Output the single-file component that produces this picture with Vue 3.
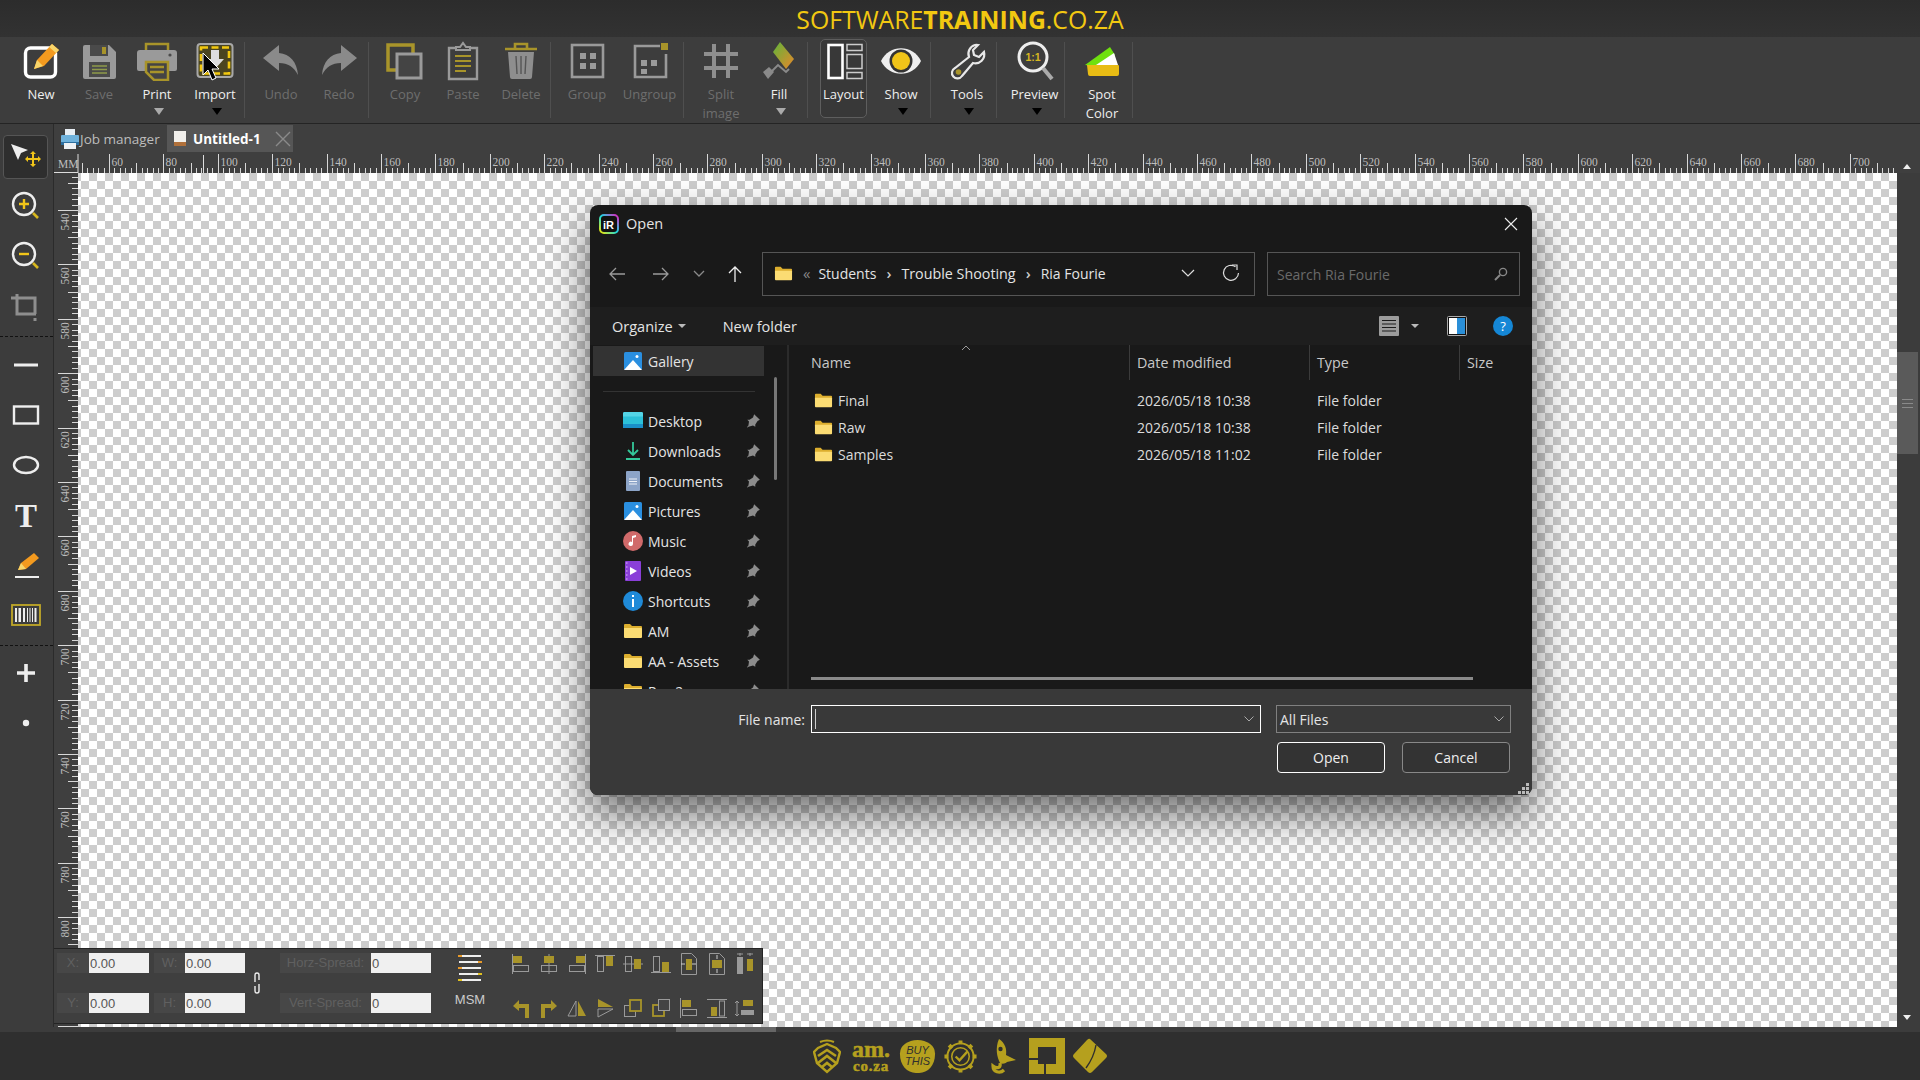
<template>
  <div class="app">
    <header class="title-bar"><span>SOFTWARE</span><b>TRAINING</b><span>.CO.ZA</span></header>

    <div class="toolbar">
      <template v-for="(t, i) in toolbar" :key="i">
        <i v-if="t.sep" class="tb-sep"></i>
        <button v-else class="tb-btn" :class="{ off: t.off, boxed: t.boxed }" :style="{ width: t.w + 'px', marginLeft: (t.ml || 0) + 'px' }">
          <svg class="tb-icon" viewBox="0 0 40 40" v-html="t.icon"></svg>
          <span class="tb-label">{{ t.label }}</span>
          <span v-if="t.label2" class="tb-label">{{ t.label2 }}</span>
          <i v-if="t.arrow" class="tb-arrow" :class="t.arrow"></i>
        </button>
      </template>
    </div>

    <div class="workspace">
      <aside class="side-tools">
        <template v-for="(t, i) in sideTools" :key="i">
          <hr v-if="t.dash" class="dash" :class="t.dash" />
          <div v-else class="side-cell">
            <div class="side-btn" :class="{ active: t.active }">
              <svg viewBox="0 0 36 36" width="36" height="36" v-html="t.icon"></svg>
            </div>
          </div>
        </template>
      </aside>

      <div class="doc-area">
        <div class="tabs">
          <div class="tab">
            <svg viewBox="0 0 20 22" width="20" height="22">
              <rect x="5" y="1" width="10" height="7" fill="#e8eef4" />
              <rect x="1" y="7" width="18" height="9" rx="1" fill="#6fb2dc" />
              <rect x="1" y="14" width="18" height="3" fill="#2d6f9f" />
              <rect x="4" y="15" width="12" height="6" fill="#eef1f4" />
            </svg>
            <span>Job manager</span>
          </div>
          <div class="tab current">
            <svg viewBox="0 0 14 18" width="14" height="18">
              <rect x="1" y="1" width="12" height="11" fill="#f2f0ec" />
              <rect x="1" y="12" width="12" height="4" fill="#b0703a" />
            </svg>
            <b>Untitled-1</b>
            <svg class="tab-x" viewBox="0 0 16 16" width="16" height="16"><path d="M1 1l14 14M15 1L1 15" stroke="#8a8a8a" stroke-width="1.4" /></svg>
          </div>
        </div>

        <svg class="h-ruler" width="1866" height="20" viewBox="0 0 1866 20">
          <text x="4" y="15" class="rt">MM</text>
          <path d="M0 19.5h24M24 1v19" stroke="#ddd" />
          <path v-for="t in hTicks" :key="t.x" :d="`M${t.x} ${20 - t.h}v${t.h}`" stroke="#d8d8d8" />
          <text v-for="l in hLabels" :key="l.v" :x="l.x + 2" y="13" class="rt">{{ l.v }}</text>
          <path d="M149.5 2v18" stroke="#ddd" />
        </svg>

        <div class="canvas-row">
          <svg class="v-ruler" width="24" height="854" viewBox="0 0 24 854">
            <path v-for="t in vTicks" :key="t.y" :d="`M${24 - t.h} ${t.y}h${t.h}`" stroke="#d8d8d8" />
            <text v-for="l in vLabels" :key="l.v" class="rt" :transform="`translate(15 ${l.y + 20}) rotate(-90)`">{{ l.v }}</text>
          </svg>
          <div class="canvas"></div>
          <div class="v-scroll">
            <svg class="sc-up" viewBox="0 0 8 5" width="8" height="5"><path d="M4 0l4 5H0z" fill="#eee" /></svg>
            <div class="v-thumb"><i></i><i></i><i></i></div>
            <svg class="sc-down" viewBox="0 0 8 5" width="8" height="5"><path d="M0 0h8L4 5z" fill="#eee" /></svg>
          </div>
        </div>
      </div>
    </div>

    <div class="h-scroll"><div class="h-thumb"></div></div>

    <footer class="bottom-bar">
      <svg viewBox="0 0 28 35" width="28" height="35">
        <path d="M7 3q7-3 14 0" fill="none" stroke="#b5a01e" stroke-width="2" />
        <path d="M14 5l9 4 4 4-3 11-10 9-10-9-3-11 4-4z" fill="none" stroke="#b5a01e" stroke-width="2.4" />
        <path d="M5 17l9-6 9 6M5 24l9-7 9 7M9 28l5-4 5 4" fill="none" stroke="#b5a01e" stroke-width="2.6" />
      </svg>
      <div class="logo-am"><b>am.</b><b>co.za</b></div>
      <div class="logo-buy"><span>BUY</span><span>THIS</span></div>
      <svg viewBox="0 0 36 36" width="35" height="35">
        <circle cx="18" cy="18" r="13.5" fill="none" stroke="#b5a01e" stroke-width="2" />
        <circle cx="18" cy="18" r="9" fill="none" stroke="#b5a01e" stroke-width="1.6" />
        <path d="M18 1.5v4M18 30.5v4M1.5 18h4M30.500 18h4M6.300 6.300l3 3M26.700 26.700l3 3M29.700 6.300l-3 3M9.300 26.700l-3 3" stroke="#b5a01e" stroke-width="4" />
        <path d="M13 18l4 4 8-9" fill="none" stroke="#b5a01e" stroke-width="2.4" />
      </svg>
      <svg viewBox="0 0 28 35" width="28" height="35">
        <path d="M9 0c6 4 8 10 7 16l10 5-9 2c-2 2-5 2-7 1C7 18 5 9 9 0z" fill="#b5a01e" />
        <circle cx="10.500" cy="10" r="2.200" fill="#2f2f2f" />
        <path d="M10 24c1 5-3 6-7 3 0 6 7 8 11 4" fill="none" stroke="#b5a01e" stroke-width="3.200" />
      </svg>
      <svg viewBox="0 0 36 36" width="36" height="36">
        <rect width="36" height="36" fill="#b5a01e" />
        <rect x="9" y="9" width="18" height="17" fill="#2f2f2f" />
        <path d="M0 21h9M16 26v10" stroke="#2f2f2f" stroke-width="2" />
      </svg>
      <svg viewBox="0 0 36 36" width="36" height="36">
        <path d="M18 1l16 15q2 2 0 4L20 34q-2 2-4 0L2 20q-2-2 0-4L15 2q2-2 3-1z" fill="#b5a01e" />
        <path d="M24 7q-2 12-10 23" fill="none" stroke="#2f2f2f" stroke-width="1.4" />
      </svg>
    </footer>

    <!-- floating property bar over the canvas -->
    <div class="prop-panel">
      <div class="prop-fields">
        <label>X:</label><input class="num" value="0.00" readonly />
        <label class="second">W:</label><input class="num" value="0.00" readonly />
        <svg class="link" viewBox="0 0 10 26" width="10" height="26">
          <path d="M3 12V5a2 2 0 0 1 4 0v5M7 14v7a2 2 0 0 1-4 0v-5" fill="none" stroke="#eee" stroke-width="1.4" />
        </svg>
        <label>Horz-Spread:</label><input class="num" value="0" readonly />
        <label>Y:</label><input class="num" value="0.00" readonly />
        <label class="second">H:</label><input class="num" value="0.00" readonly />
        <label>Vert-Spread:</label><input class="num" value="0" readonly />
      </div>
      <div class="msm">
        <svg viewBox="0 0 26 30" width="26" height="30">
          <path d="M2 3h22M2 9h22M2 15h22M2 21h22M2 27h22" stroke="#eee" stroke-width="2" />
          <path d="M1 2h4v2H1zM21 8h4v2h-4zM1 14h4v2H1z" fill="#e89a2a" />
          <path d="M21 20h4v2h-4zM1 26h4v2H1z" fill="#e0c020" />
        </svg>
        <span>MSM</span>
      </div>
      <div class="align-grid">
        <svg v-for="(a, i) in alignIcons" :key="i" viewBox="0 0 22 22" width="22" height="22" v-html="a"></svg>
      </div>
    </div>

    <!-- Open dialog -->
    <section class="dialog">
      <div class="dlg-title">
        <svg viewBox="0 0 20 20" width="20" height="20">
          <defs>
            <linearGradient id="irg" x1="0" y1="1" x2="1" y2="0">
              <stop offset="0" stop-color="#f5e600" /><stop offset=".5" stop-color="#18d8e0" /><stop offset="1" stop-color="#e020c0" />
            </linearGradient>
          </defs>
          <rect x="1" y="1" width="18" height="18" rx="4" fill="#111" stroke="url(#irg)" stroke-width="2" />
          <text x="4" y="14.500" class="ir">iR</text>
        </svg>
        <span>Open</span>
        <svg class="dlg-close" viewBox="0 0 14 14" width="14" height="14"><path d="M1 1l12 12M13 1L1 13" stroke="#eee" stroke-width="1.100" /></svg>
      </div>

      <div class="addr-row">
        <button class="nav-b w44"><svg viewBox="0 0 18 18" width="18" height="18"><path d="M17 9H2M8 3L2 9l6 6" fill="none" stroke="#9a9a9a" stroke-width="1.300" /></svg></button>
        <button class="nav-b w44"><svg viewBox="0 0 18 18" width="18" height="18"><path d="M1 9h15M10 3l6 6-6 6" fill="none" stroke="#9a9a9a" stroke-width="1.300" /></svg></button>
        <button class="nav-b w32"><svg viewBox="0 0 12 8" width="12" height="8"><path d="M1 1l5 5 5-5" fill="none" stroke="#8a8a8a" stroke-width="1.300" /></svg></button>
        <button class="nav-b w40"><svg viewBox="0 0 18 18" width="18" height="18"><path d="M9 17V2M3 8l6-6 6 6" fill="none" stroke="#eee" stroke-width="1.300" /></svg></button>
        <div class="addr-box">
          <svg class="addr-folder" viewBox="0 0 20 20" width="19" height="19" v-html="folder"></svg>
          <span class="crumb-sep first">«</span>
          <span>Students</span><span class="crumb-sep">›</span>
          <span class="wide">Trouble Shooting</span><span class="crumb-sep">›</span>
          <span>Ria Fourie</span>
          <span class="addr-end">
            <svg viewBox="0 0 14 8" width="14" height="8"><path d="M1 1l6 6 6-6" fill="none" stroke="#ddd" stroke-width="1.200" /></svg>
          </span>
          <span class="addr-refresh">
            <svg viewBox="0 0 18 18" width="18" height="18"><path d="M13.500 2.800A7.500 7.500 0 1 0 16.500 9" fill="none" stroke="#ddd" stroke-width="1.200" /><path d="M10 1h5v5" fill="none" stroke="#ddd" stroke-width="1.200" /></svg>
          </span>
        </div>
        <div class="search-box">
          <span>Search Ria Fourie</span>
          <svg viewBox="0 0 14 14" width="14" height="14"><circle cx="9" cy="5" r="3.600" fill="none" stroke="#888" stroke-width="1.400" /><path d="M6 8l-5 5" stroke="#888" stroke-width="2" /></svg>
        </div>
      </div>

      <div class="cmd-strip">
        <span>Organize</span><i class="caret"></i>
        <span class="new-folder">New folder</span>
        <div class="cmd-right">
          <svg viewBox="0 0 20 20" width="20" height="20"><rect width="20" height="20" rx="1" fill="#9c9c9c" /><path d="M3 4.500h14M3 8h14M3 11.500h14M3 15h14" stroke="#1c1c1c" stroke-width="1.200" /></svg>
          <i class="caret view"></i>
          <svg class="pane-ic" viewBox="0 0 20 20" width="20" height="20"><rect x=".5" y=".5" width="19" height="19" rx="1" fill="#111" stroke="#aaa" /><rect x="2" y="2" width="8" height="16" fill="#fff" /><rect x="10" y="2" width="8" height="16" fill="#2a8fd8" /></svg>
          <svg class="help-ic" viewBox="0 0 20 20" width="20" height="20"><circle cx="10" cy="10" r="10" fill="#1587d6" /><text x="10" y="15" class="q">?</text></svg>
        </div>
      </div>

      <div class="dlg-body">
        <nav class="nav-pane">
          <div class="nav-row gallery">
            <svg viewBox="0 0 20 20" width="20" height="20" v-html="picIcon"></svg>
            <span>Gallery</span>
          </div>
          <div class="nav-line"></div>
          <div v-for="n in navItems" :key="n.name" class="nav-row">
            <svg viewBox="0 0 20 20" width="20" height="20" v-html="n.icon"></svg>
            <span>{{ n.name }}</span>
            <svg class="pin" viewBox="0 0 14 14" width="16" height="16"><path d="M8 1l5 5-2 1-2 3v2L7 11 3 12l-1 1 0-1 1-1 .5-3.500L2 6h2l3-2z" fill="#8c8c8c" /></svg>
          </div>
          <i class="nav-thumb"></i>
        </nav>
        <div class="file-list">
          <div class="f-head">
            <span>Name</span><span>Date modified</span><span>Type</span><span>Size</span>
            <svg class="sort" viewBox="0 0 10 6" width="10" height="6"><path d="M1 5l4-4 4 4" fill="none" stroke="#999" /></svg>
          </div>
          <div v-for="f in files" :key="f.name" class="f-row">
            <span class="f-name"><svg viewBox="0 0 20 20" width="19" height="19" v-html="folder"></svg>{{ f.name }}</span>
            <span>{{ f.date }}</span>
            <span>File folder</span>
            <span></span>
          </div>
          <i class="list-hbar"></i>
        </div>
      </div>

      <div class="dlg-foot">
        <div class="foot-row">
          <label class="fn-label">File name:</label>
          <div class="fn-input"><i class="text-caret"></i>
            <svg viewBox="0 0 10 6" width="10" height="6"><path d="M.5.500L5 5 9.500.500" fill="none" stroke="#aaa" /></svg>
          </div>
          <div class="fn-filter">All Files
            <svg viewBox="0 0 10 6" width="10" height="6"><path d="M.5.500L5 5 9.500.500" fill="none" stroke="#aaa" /></svg>
          </div>
        </div>
        <div class="foot-btns">
          <button class="dbtn primary">Open</button>
          <button class="dbtn">Cancel</button>
        </div>
        <svg class="grip" viewBox="0 0 11 11" width="11" height="11"><path d="M8 0h3v3H8zM4 4h3v3H4zM8 4h3v3H8zM0 8h3v3H0zM4 8h3v3H4zM8 8h3v3H8z" fill="#bbb" /></svg>
      </div>
    </section>

    <svg class="cursor" viewBox="0 0 18 30" width="18" height="30">
      <path d="M1 1v22l5-5 4 10 4-2-4-9h7z" fill="#000" stroke="#fff" stroke-width="1" />
    </svg>
  </div>
</template>

<script setup>
const G = '#a8942a'
const L = '#9a9a9a'

const toolbar = [
  { label: 'New', w: 58, ml: 12, icon: `<rect x="4.500" y="7" width="30" height="29" rx="5" fill="none" stroke="#fff" stroke-width="3.400"/><path d="M13 28l3-9L31 3l7 6-15 16z" fill="#f39a1f"/><path d="M31 3l7 6-3 3-7-6z" fill="#f8d56b"/><path d="M13 28l3-9 6 6z" fill="#f8d56b"/>` },
  { label: 'Save', w: 58, off: true, icon: `<path d="M4 6a2 2 0 0 1 2-2h24l7 7v25a2 2 0 0 1-2 2H6a2 2 0 0 1-2-2z" fill="#9a9a9a"/><rect x="11" y="4" width="18" height="11" fill="#4a4a4a"/><rect x="23" y="6" width="4" height="7" fill="${G}"/><rect x="10" y="21" width="21" height="15" fill="#4a4a4a"/><path d="M13 25h15M13 28.500h15M13 32h15" stroke="#8f9a4a" stroke-width="1.600"/>` },
  { label: 'Print', w: 58, arrow: 'grey', icon: `<path d="M9 10V3h22v7" fill="none" stroke="${G}" stroke-width="2.500"/><path d="M0 12a3 3 0 0 1 3-3h34a3 3 0 0 1 3 3v16a2 2 0 0 1-2 2H2a2 2 0 0 1-2-2z" fill="#9a9a9a"/><circle cx="33" cy="14" r="1.600" fill="#4a4a4a"/><path d="M9 21h22v18H17l-8-8z" fill="#444" stroke="${G}" stroke-width="2.500"/><path d="M13 26h14M13 31h14" stroke="${G}" stroke-width="2.500"/>` },
  { label: 'Import', w: 58, arrow: 'black', icon: `<rect x="2.500" y="3" width="35" height="33" rx="3" fill="#4b4520" stroke="#a8a8a8" stroke-width="2"/><rect x="6" y="6.500" width="28" height="26" fill="none" stroke="#f2c80f" stroke-width="2.600" stroke-dasharray="7 3.500"/><path d="M16 9h8v9h5l-9 10-9-10h5z" fill="#ddd"/>` },
  { sep: true },
  { label: 'Undo', w: 58, off: true, icon: `<path d="M2 17L18 4v8c11 1 18 9 19 22-4-8-10-12-19-12v8z" fill="#8a8a8a"/>` },
  { label: 'Redo', w: 58, off: true, icon: `<path d="M38 17L22 4v8c-11 1-18 9-19 22 4-8 10-12 19-12v8z" fill="#8a8a8a"/>` },
  { sep: true },
  { label: 'Copy', w: 58, off: true, icon: `<rect x="3" y="4" width="25" height="25" fill="none" stroke="${G}" stroke-width="3.500"/><rect x="12" y="13" width="24" height="24" fill="#444" stroke="#9a9a9a" stroke-width="3"/>` },
  { label: 'Paste', w: 58, off: true, icon: `<path d="M12 7H6v31h28V7h-6" fill="none" stroke="${L}" stroke-width="2.400"/><path d="M13 9V6h4l3-4 3 4h4v3z" fill="none" stroke="${L}" stroke-width="2"/><path d="M12 15h16M12 20h16M12 25h16M12 30h11" stroke="${G}" stroke-width="2"/>` },
  { label: 'Delete', w: 58, off: true, icon: `<path d="M4 8h32M14 7V3h12v4" fill="none" stroke="${G}" stroke-width="2.600"/><path d="M7 11h26l-2 25a2 2 0 0 1-2 2H11a2 2 0 0 1-2-2z" fill="#8e8e8e"/><path d="M15 15l1 18M20 15v18M25 15l-1 18" stroke="#555" stroke-width="1.400"/>` },
  { sep: true },
  { label: 'Group', w: 58, off: true, icon: `<rect x="5" y="4" width="31" height="32" fill="none" stroke="${L}" stroke-width="2.600"/><path d="M13 12h6v6h-6zM23 12h6v6h-6zM13 22h6v6h-6zM23 22h6v6h-6z" fill="${L}"/>` },
  { label: 'Ungroup', w: 67, off: true, icon: `<path d="M30 5H5v31h31V13" fill="none" stroke="${L}" stroke-width="2.600"/><path d="M31 2h7v7h-7z" fill="${G}"/><path d="M11 19h6v6h-6zM21 19h6v6h-6zM11 28h6v5h-6z" fill="${L}"/>` },
  { sep: true },
  { label: 'Split', label2: 'image', w: 60, off: true, icon: `<path d="M13 3v34M27 3v34M3 13h34M3 27h34" stroke="#8e8e8e" stroke-width="4"/>` },
  { label: 'Fill', w: 56, arrow: 'grey', icon: `<defs><linearGradient id="rollg" x1="0" y1="0" x2="1" y2="1"><stop offset="0" stop-color="#5fb53a"/><stop offset="1" stop-color="#e8872a"/></linearGradient></defs><path d="M14 11L21 1l14 17-8 10z" fill="url(#rollg)"/><path d="M30 28l-3 3-8-7-8 8" fill="none" stroke="#8a8a8a" stroke-width="2"/><path d="M4 31l6-5 5 5-6 7z" fill="#8a8a8a"/>` },
  { sep: true },
  { label: 'Layout', w: 47, ml: 5, boxed: true, icon: `<rect x="4.500" y="4" width="14" height="33" fill="none" stroke="#fff" stroke-width="2.600"/><path d="M23 3.500h15v6H23zM23 13.500h15v14H23zM23 31.500h15v6H23z" fill="none" stroke="#ccc" stroke-width="1.500"/>` },
  { label: 'Show', w: 58, ml: 5, arrow: 'black', icon: `<path d="M0 20C8 3 32 3 40 20 32 37 8 37 0 20z" fill="#eee"/><circle cx="20" cy="20" r="11.500" fill="#333"/><circle cx="20" cy="20" r="9" fill="#f0c419"/>` },
  { sep: true },
  { label: 'Tools', w: 58, arrow: 'black', icon: `<path d="M28 4a9 9 0 0 0-6 12L8 27a5.500 5.500 0 1 0 7 8l11-13a9 9 0 0 0 11-11l-5 5-5-2-1-5 5-5a9 9 0 0 0-3 0z" fill="none" stroke="#e8e8e8" stroke-width="2.200"/><circle cx="11.500" cy="31" r="2.800" fill="${G}"/>` },
  { sep: true },
  { label: 'Preview', w: 59, ml: 1, arrow: 'black', icon: `<circle cx="18" cy="16" r="14" fill="none" stroke="#eee" stroke-width="3"/><path d="M28 27l9 11" stroke="#aaa" stroke-width="4"/><text x="18" y="20" text-anchor="middle" font-family="Liberation Sans" font-weight="700" font-size="10.500" fill="#d8b820">1:1</text>` },
  { sep: true },
  { label: 'Spot', label2: 'Color', w: 60, icon: `<path d="M3 24L28 6l5 8-14 12z" fill="#6fe00f"/><path d="M14 24l18-12 4 12z" fill="#fff"/><path d="M5 24h31a1 1 0 0 1 1 1l0 8a2 2 0 0 1-2 2H8a2 2 0 0 1-2-2z" fill="#e8bc14"/>` },
  { sep: true }
]

const sideTools = [
  { active: true, icon: `<path d="M3 5l17 6-7 3-3 7z" fill="#eee"/><path d="M25 12l3 3h-2v4h4v-2l3 3-3 3v-2h-4v4h2l-3 3-3-3h2v-4h-4v2l-3-3 3-3v2h4v-4h-2z" fill="#f0c419"/>` },
  { icon: `<circle cx="16" cy="15" r="11" fill="none" stroke="#eee" stroke-width="2.400"/><path d="M11 15h10M16 10v10" stroke="#f0c419" stroke-width="2.400"/><path d="M25 24l5 5" stroke="#d8b820" stroke-width="2.600"/>` },
  { icon: `<circle cx="16" cy="15" r="11" fill="none" stroke="#eee" stroke-width="2.400"/><path d="M11 15h10" stroke="#f0c419" stroke-width="2.400"/><path d="M25 24l5 5" stroke="#d8b820" stroke-width="2.600"/>` },
  { icon: `<path d="M3 9h5M9 5v20h19" fill="none" stroke="#8e8e8e" stroke-width="3"/><path d="M9 9h18v16" fill="none" stroke="#8e8e8e" stroke-width="3"/><path d="M27 29v3" stroke="#8e8e8e" stroke-width="3"/>` },
  { dash: 'd1' },
  { icon: `<path d="M6 18h24" stroke="#eee" stroke-width="3"/>` },
  { icon: `<rect x="6" y="9.500" width="24" height="17" fill="none" stroke="#eee" stroke-width="2.400"/>` },
  { icon: `<ellipse cx="18" cy="18" rx="12" ry="8" fill="none" stroke="#eee" stroke-width="2.400"/>` },
  { icon: `<text x="18" y="30" text-anchor="middle" font-family="Liberation Serif" font-weight="700" font-size="33" fill="#eee">T</text>` },
  { icon: `<path d="M10 23l3-7L26 6l5 5-13 11z" fill="#f39a1f"/><path d="M10 23l3-7 5 6z" fill="#f8d56b"/><path d="M7 30h24" stroke="#eee" stroke-width="2"/>` },
  { icon: `<rect x="4" y="8" width="28" height="20" fill="none" stroke="#c0a828" stroke-width="1.800"/><path d="M7 11h2v14H7zM10.500 11h2.500v14h-2.500zM15 11h2v14h-2zM19 11h1v14h-1zM21.500 11h1v14h-1zM24 11h1v14h-1zM26.500 11h2v14h-2z" fill="#eee"/>` },
  { dash: 'd2' },
  { icon: `<path d="M18 9v18M9 18h18" stroke="#eee" stroke-width="3.600"/>` },
  { icon: `<circle cx="18" cy="18" r="3.200" fill="#eee"/>` }
]

const alignIcons = [
  `<path d="M2.500 1v20" stroke="${L}"/><rect x="3" y="3" width="9" height="7" fill="${G}"/><rect x="3.500" y="12.500" width="15" height="6" fill="none" stroke="${L}"/>`,
  `<path d="M11 1v20" stroke="${L}"/><rect x="6" y="3" width="10" height="7" fill="${G}"/><rect x="3.500" y="12.500" width="15" height="6" fill="none" stroke="${L}"/>`,
  `<path d="M19.500 1v20" stroke="${L}"/><rect x="10" y="3" width="9" height="7" fill="${G}"/><rect x="3.500" y="12.500" width="15" height="6" fill="none" stroke="${L}"/>`,
  `<path d="M1 2.500h20" stroke="${L}"/><rect x="3.500" y="3.500" width="6" height="15" fill="none" stroke="${L}"/><rect x="12" y="3" width="7" height="10" fill="${G}"/>`,
  `<path d="M1 11h20" stroke="${L}"/><rect x="3.500" y="3.500" width="6" height="15" fill="none" stroke="${L}"/><rect x="12" y="6" width="7" height="10" fill="${G}"/>`,
  `<path d="M1 19.500h20" stroke="${L}"/><rect x="3.500" y="3.500" width="6" height="15" fill="none" stroke="${L}"/><rect x="12" y="9" width="7" height="10" fill="${G}"/>`,
  `<path d="M3.500.500h10l5 5v16h-15z" fill="none" stroke="${L}"/><rect x="8" y="6" width="6" height="11" fill="${G}"/><path d="M3 11h4M14 11h4" stroke="#ccc"/>`,
  `<path d="M3.500.500h10l5 5v16h-15z" fill="none" stroke="${L}"/><rect x="6" y="7" width="10" height="8" fill="${G}"/><path d="M11 2v4M11 16v4" stroke="#ccc"/>`,
  `<path d="M3 1h6M13 1h6M6 0v3M16 0v3" stroke="${L}"/><rect x="3" y="4" width="6" height="17" fill="${L}"/><rect x="13" y="6" width="6" height="12" fill="${G}"/>`,
  `<path d="M9 3L3 9l6 5v-3h6v10h4V7H9z" fill="${G}"/>`,
  `<path d="M13 3l6 6-6 5v-3H7v10H3V7h10z" fill="${G}"/>`,
  `<path d="M10 4L2 19h8z" fill="none" stroke="${L}"/><path d="M12 4l8 15h-8z" fill="${G}"/>`,
  `<path d="M4 2l15 8H4z" fill="${G}"/><path d="M4 12h15l-15 8z" fill="none" stroke="${L}"/>`,
  `<rect x="2.500" y="8.500" width="11" height="11" fill="none" stroke="${L}"/><rect x="8" y="3" width="11" height="11" fill="#444" stroke="${G}" stroke-width="1.800"/>`,
  `<rect x="3" y="8" width="11" height="11" fill="none" stroke="${G}" stroke-width="1.800"/><rect x="8.500" y="2.500" width="11" height="11" fill="#444" stroke="${L}"/>`,
  `<path d="M2.500 1v20" stroke="${L}"/><rect x="4" y="3" width="9" height="7" fill="${G}"/><rect x="4.500" y="12.500" width="14" height="6" fill="none" stroke="${L}"/>`,
  `<path d="M1 2.500h20M1 20.500h20" stroke="${L}"/><rect x="13.500" y="4" width="5" height="15" fill="none" stroke="${L}"/><rect x="5" y="10" width="6" height="9" fill="${G}"/>`,
  `<path d="M3 4v15M1 6l2-2 2 2M1 17l2 2 2-2" fill="none" stroke="${L}"/><rect x="9" y="3" width="10" height="6" fill="${G}"/><rect x="7" y="13" width="13" height="5" fill="${L}"/>`
]

const folder = `<path d="M1 4a1 1 0 0 1 1-1h5l2 2h9a1 1 0 0 1 1 1v3H1z" fill="#dcae2e"/><path d="M1 7h17a1 1 0 0 1 1 1v8a1 1 0 0 1-1 1H2a1 1 0 0 1-1-1z" fill="#fbdc73"/>`
const picIcon = `<rect x="1" y="1" width="18" height="18" rx="1.500" fill="#2a8fe0"/><circle cx="14" cy="5.500" r="1.500" fill="#fff"/><path d="M1 19l9-10 9 10z" fill="#fff"/>`

const navItems = [
  { name: 'Desktop', icon: `<rect x="0" y="1" width="20" height="16" rx="1.500" fill="#2cc0d8"/><path d="M0 2.500a1.500 1.500 0 0 1 1.500-1.500h17a1.500 1.500 0 0 1 1.500 1.500v3H0z" fill="#54d4e6"/><path d="M0 13h20v4H0z" fill="#1a8fc8"/>` },
  { name: 'Downloads', icon: `<path d="M10 1v12M5 9l5 5 5-5" fill="none" stroke="#34c89a" stroke-width="1.800"/><path d="M3 18h14" stroke="#34c89a" stroke-width="2"/>` },
  { name: 'Documents', icon: `<rect x="3" y="0" width="14" height="20" rx="1" fill="#8ca4c8"/><path d="M6 8h8M6 10.500h8M6 13h8" stroke="#eef2f8" stroke-width="1.100"/>` },
  { name: 'Pictures', icon: picIcon },
  { name: 'Music', icon: `<circle cx="10" cy="10" r="10" fill="#d06a6a"/><path d="M9 5l4-1v2l-3 1v6a2.200 2.200 0 1 1-1-2z" fill="#fff"/>` },
  { name: 'Videos', icon: `<rect x="2" y="0" width="16" height="20" rx="1" fill="#8a3fd8"/><path d="M7 6l7 4-7 4z" fill="#fff"/><path d="M3 2h1.500M3 6h1.500M3 10h1.500M3 14h1.500M3 18h1.500" stroke="#d8bff5" />` },
  { name: 'Shortcuts', icon: `<circle cx="10" cy="10" r="10" fill="#1f8ad8"/><rect x="9" y="8" width="2" height="8" fill="#fff"/><rect x="9" y="4" width="2" height="2" fill="#fff"/>` },
  { name: 'AM', icon: folder },
  { name: 'AA - Assets', icon: folder },
  { name: 'Rev 2', icon: folder }
]

const files = [
  { name: 'Final', date: '2026/05/18 10:38' },
  { name: 'Raw', date: '2026/05/18 10:38' },
  { name: 'Samples', date: '2026/05/18 11:02' }
]

// ruler maths: 20 mm = 54.4 px on both axes
const MM = 54.4 / 20
const tickLen = (v) => (v % 20 === 0 ? 19 : v % 10 === 0 ? 10 : 5)

const hTicks = []
const hLabels = []
for (let v = 50; v <= 720; v += 2) {
  const x = Math.round(55 + (v - 60) * MM) + 0.5
  if (x < 24 || x > 1843) continue
  hTicks.push({ x, h: tickLen(v) })
  if (v % 20 === 0 && x < 1800) hLabels.push({ v, x })
}

const vTicks = []
const vLabels = []
for (let v = 526; v <= 840; v += 2) {
  const y = Math.round(37 + (v - 540) * MM) + 0.5
  if (y < 0 || y > 854) continue
  vTicks.push({ y, h: v % 20 === 0 ? 20 : v % 10 === 0 ? 10 : 6 })
  if (v % 20 === 0 && y + 24 < 774) vLabels.push({ v, y })
}
</script>

<style>
html, body { margin: 0; background: #2f2f2f; }
</style>

<style scoped>
.app { width: 1920px; height: 1080px; position: relative; overflow: hidden; display: flex; flex-direction: column; background: #3c3c3c; font-family: "Open Sans", "Noto Sans", sans-serif; color: #eee; }
.title-bar { height: 37px; background: linear-gradient(#2c2c2c, #323232); display: flex; justify-content: center; align-items: center; font-size: 24.800px; color: #f2c811; }
.title-bar b { font-weight: 700; }

.toolbar { height: 86px; display: flex; border-bottom: 1px solid #242424; background: #3d3d3d; box-sizing: content-box; flex: none; }
.tb-btn { background: none; border: 0; padding: 4px 0 0; display: flex; flex-direction: column; align-items: center; color: #eee; font: inherit; position: relative; height: 86px; box-sizing: border-box; }
.tb-btn.off { color: #6e6e6e; }
.tb-btn.boxed { border: 1px solid #5e5e5e; border-radius: 5px; height: 79px; margin-top: 2px; padding-top: 1px; background: #383838; }
.tb-icon { width: 40px; height: 40px; flex: none; }
.tb-label { font-size: 13px; line-height: 19px; white-space: nowrap; }
.tb-label:first-of-type { margin-top: 4px; }
.tb-arrow { margin: 4px 0 0 4px; width: 0; height: 0; border-left: 5px solid transparent; border-right: 5px solid transparent; border-top: 7px solid #000; }
.tb-arrow.grey { border-top-color: #aaa; }
.tb-sep { width: 1px; height: 76px; background: #4f4f4f; margin: 5px 7px 0 0; flex: none; }

.workspace { flex: 1; display: flex; min-height: 0; }
.side-tools { width: 54px; flex: none; box-sizing: border-box; border-right: 1px solid #2b2b2b; padding-top: 8px; background: #3c3c3c; }
.side-cell { height: 50px; display: flex; align-items: center; justify-content: center; padding-right: 2px; }
.side-btn { width: 45px; height: 44px; display: flex; align-items: center; justify-content: center; box-sizing: border-box; }
.side-btn.active { background: #2e2e2e; border: 1px solid #555; border-radius: 4px; }
.dash { border: 0; border-top: 1px dashed #111; margin: 0; }
.dash.d1 { margin: 4px 0 3px; }
.dash.d2 { margin: 5px 0 2px; }

.doc-area { flex: 1; display: flex; flex-direction: column; min-width: 0; }
.tabs { height: 29px; display: flex; flex: none; align-items: stretch; background: #3f3f3f; }
.tab { display: flex; align-items: center; font-size: 13.500px; color: #bdbdbd; width: 113px; padding-left: 6px; box-sizing: border-box; }
.tab.current { width: 126px; background: #565656; margin: 1px 0; color: #fff; padding-left: 6px; }
.tab.current b { margin-left: 6px; font-weight: 700; font-size: 13.500px; }
.tab-x { margin-left: 14px; }
.h-ruler { display: block; flex: none; background: #3f3f3f; }
.rt { font-family: "Liberation Serif", serif; font-size: 11.500px; fill: #bdbdbd; }
.canvas-row { flex: 1; display: flex; min-height: 0; }
.v-ruler { display: block; flex: none; background: #3f3f3f; }
.canvas { flex: 1; background: repeating-conic-gradient(#cdcdcd 0 25%, #fff 0 50%) 3px 0 / 16px 16px; }
.v-scroll { width: 23px; flex: none; background: #3c3c3c; position: relative; }
.v-thumb { position: absolute; left: 0; right: 2px; top: 179px; height: 102px; background: #5a5a5a; display: flex; flex-direction: column; align-items: center; justify-content: center; gap: 3px; }
.v-thumb i { width: 11px; height: 1px; background: #8a8a8a; }
.sc-up { position: absolute; left: 6px; top: -9px; }
.sc-down { position: absolute; left: 6px; bottom: 7px; }
.h-scroll { height: 5px; flex: none; background: #3c3c3c; position: relative; }
.h-thumb { position: absolute; left: 676px; width: 100px; height: 5px; background: #666; }

.bottom-bar { height: 48px; flex: none; background: #2f2f2f; display: flex; align-items: center; padding-left: 813px; box-sizing: border-box; }
.bottom-bar > :nth-child(2) { margin-left: 10px; }
.bottom-bar > :nth-child(3) { margin-left: 9px; }
.bottom-bar > :nth-child(4) { margin-left: 8px; }
.bottom-bar > :nth-child(5) { margin-left: 12px; }
.bottom-bar > :nth-child(6) { margin-left: 11px; }
.bottom-bar > :nth-child(7) { margin-left: 7px; }
.logo-am { width: 40px; height: 34px; display: flex; flex-direction: column; align-items: center; font-family: "Liberation Serif", serif; color: #b5a01e; -webkit-text-stroke: .5px #b5a01e; }
.logo-am b:first-child { font-size: 24px; line-height: 20px; height: 20px; }
.logo-am b:last-child { font-size: 15px; line-height: 14px; height: 14px; letter-spacing: .8px; }
.logo-buy { width: 35px; height: 33px; background: #b5a01e; border-radius: 50% 50% 45% 45% / 40% 40% 55% 55%; color: #2f2f2f; font-size: 11px; line-height: 11px; font-style: italic; display: flex; flex-direction: column; align-items: center; justify-content: center; font-family: "Liberation Sans", sans-serif; }

.prop-panel { position: absolute; left: 54px; top: 948px; width: 709px; height: 76px; box-sizing: border-box; background: #3f3f3f; border: 1px solid #242424; border-left: 0; padding: 4px 0 0 3px; display: flex; }
.prop-fields { display: grid; grid-template-columns: 32px 60px 36px 60px 35px 91px 60px; grid-template-rows: 20px 20px; row-gap: 20px; width: 374px; flex: none; }
.prop-fields label { background: #474747; color: #606060; font-size: 13px; line-height: 20px; text-align: center; white-space: nowrap; font-family: "Liberation Sans", sans-serif; }
.prop-fields label.second { margin-left: 5px; }
.num { width: 60px; height: 20px; box-sizing: border-box; border: 0; background: #f0f0f0; color: #555; font: 13px "Liberation Sans", sans-serif; padding: 0 1px; outline: none; }
.link { grid-column: 5; grid-row: 1 / span 2; align-self: center; margin-left: 7px; }
.msm { width: 78px; flex: none; display: flex; flex-direction: column; align-items: center; font: 13px "Liberation Sans", sans-serif; color: #ccc; gap: 9px; box-sizing: border-box; }
.align-grid { display: grid; grid-template-columns: repeat(9, 28px); grid-template-rows: 22px 22px; row-gap: 22px; justify-items: center; margin-left: -2px; }

.dialog { position: absolute; left: 590px; top: 205px; width: 942px; height: 590px; border-radius: 8px; background: #191919; display: flex; flex-direction: column; font-family: "Open Sans", "Noto Sans", sans-serif; font-size: 14px; color: #e4e4e4; box-shadow: 0 18px 44px rgba(0, 0, 0, .6); }
.dlg-title { height: 47px; flex: none; display: flex; align-items: center; padding: 0 0 10px 9px; box-sizing: border-box; font-size: 14.500px; }
.dlg-title span { margin-left: 7px; }
.dlg-close { margin-left: auto; margin-right: 14px; }
.ir { font: 700 11px "Liberation Sans", sans-serif; fill: #fff; }
.addr-row { height: 44px; flex: none; display: flex; align-items: center; padding-left: 5px; margin-bottom: 11px; }
.nav-b { background: none; border: 0; padding: 0; height: 44px; display: flex; align-items: center; justify-content: center; }
.w44 { width: 44px; } .w32 { width: 32px; } .w40 { width: 40px; }
.addr-box { margin-left: 7px; width: 493px; height: 44px; box-sizing: border-box; border: 1px solid #555; display: flex; align-items: center; padding: 0 0 2px 11px; white-space: nowrap; }
.addr-box .wide { font-size: 14.300px; }
.addr-folder { flex: none; }
.crumb-sep { color: #ccc; margin: 0 10px; font-size: 15px; font-weight: 600; }
.crumb-sep.first { margin: 0 8px 0 10px; color: #888; font-weight: 400; }
.addr-end { margin-left: auto; width: 40px; display: flex; justify-content: center; }
.addr-refresh { width: 46px; display: flex; justify-content: center; }
.search-box { margin-left: 12px; width: 253px; height: 44px; box-sizing: border-box; border: 1px solid #555; display: flex; align-items: center; justify-content: space-between; padding: 0 11px 0 9px; color: #6a6a6a; }
.cmd-strip { height: 38px; flex: none; background: #1e1e1e; display: flex; align-items: center; padding-left: 22px; position: relative; font-size: 14.500px; }
.caret { width: 0; height: 0; border-left: 4px solid transparent; border-right: 4px solid transparent; border-top: 4px solid #bbb; margin-left: 5px; }
.new-folder { margin-left: 37px; }
.cmd-right { margin-left: auto; display: flex; align-items: center; padding-right: 19px; }
.caret.view { margin: 0 0 0 12px; }
.pane-ic { margin-left: 28px; }
.help-ic { margin-left: 26px; }
.q { font: 13px "Open Sans", sans-serif; fill: #fff; text-anchor: middle; }

.dlg-body { flex: 1; display: flex; min-height: 0; }
.nav-pane { width: 197px; flex: none; overflow: hidden; position: relative; padding-top: 1px; box-sizing: border-box; }
.nav-row { height: 30px; display: flex; align-items: center; padding-left: 33px; position: relative; white-space: nowrap; }
.nav-row span { margin-left: 5px; }
.nav-row.gallery { background: #333; margin: 0 23px 0 3px; padding-left: 30px; }
.nav-line { height: 1px; background: #333; margin: 15px 32px 14px 13px; }
.pin { position: absolute; left: 155px; top: 7px; }
.nav-thumb { position: absolute; left: 184px; top: 32px; width: 3px; height: 103px; background: #777; border-radius: 2px; }
.file-list { flex: 1; border-left: 2px solid #2b2b2b; display: flex; flex-direction: column; position: relative; }
.f-head, .f-row { display: grid; grid-template-columns: 340px 180px 150px 1fr; white-space: nowrap; }
.f-head { height: 33px; margin-bottom: 9px; align-items: stretch; color: #c8c8c8; position: relative; font-size: 14.300px; }
.f-head span { padding-left: 7px; line-height: 35px; border-left: 1px solid #3b3b3b; }
.f-head span:first-child { padding-left: 22px; border-left: 0; }
.sort { position: absolute; left: 172px; top: 0; }
.f-row { height: 27px; align-items: center; color: #dcdcdc; }
.f-row > span { padding-left: 8px; }
.f-row .f-name { padding-left: 25px; display: flex; align-items: center; gap: 5px; }
.list-hbar { margin: auto 0 9px 22px; width: 662px; height: 3px; background: #8a8a8a; }

.dlg-foot { height: 106px; flex: none; background: #393939; border-radius: 0 0 8px 8px; position: relative; box-sizing: border-box; padding-top: 16px; }
.foot-row { display: flex; align-items: center; }
.fn-label { width: 215px; text-align: right; margin-right: 6px; }
.fn-input, .fn-filter { height: 28px; box-sizing: border-box; display: flex; align-items: center; justify-content: space-between; padding: 0 6px 0 3px; }
.fn-input { width: 450px; border: 1px solid #fff; }
.text-caret { width: 1px; height: 20px; background: #ccc; }
.fn-filter { width: 235px; margin-left: 15px; border: 1px solid #808080; }
.foot-btns { display: flex; gap: 17px; padding-left: 687px; margin-top: 9px; }
.dbtn { width: 108px; height: 31px; border: 1px solid #888; border-radius: 4px; background: #333; color: #eee; font: inherit; }
.dbtn.primary { border-color: #fff; }
.grip { position: absolute; right: 3px; bottom: 1px; }
.cursor { position: absolute; left: 202px; top: 52px; }
</style>
